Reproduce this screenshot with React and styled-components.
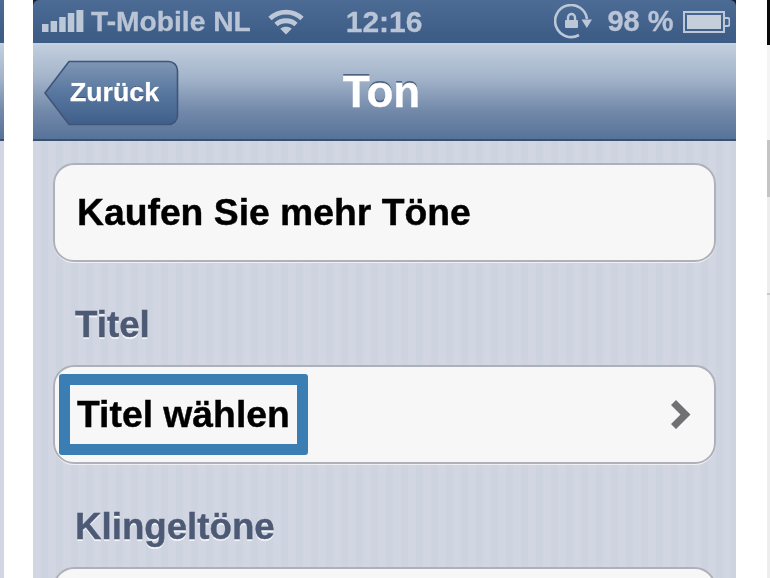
import React from "react";
import styled, { createGlobalStyle } from "styled-components";

const Global = createGlobalStyle`
  html, body { margin: 0; padding: 0; background: #fff; }
  body { width: 770px; height: 578px; overflow: hidden; font-family: "Liberation Sans", Arial, sans-serif; }
`;

const Page = styled.div`
  width: 770px;
  height: 578px;
  display: flex;
  overflow: hidden;
  background: #fff;
  filter: blur(0.45px);
`;

const Phone = styled.div`
  width: ${p => p.$w}px;
  margin-left: ${p => p.$ml || 0}px;
  flex: none;
  display: flex;
  flex-direction: column;
  overflow: hidden;
  background: #16202e;
`;

const StatusBar = styled.div`
  height: 43px;
  flex: none;
  display: flex;
  align-items: center;
  padding: 0 6px 0 9px;
  color: #b9c5d6;
  font-weight: 700;
  font-size: 28.2px;
  -webkit-text-stroke: 0.3px #b9c5d6;
  border-bottom: 2px solid #c6d2e0;
  border-radius: ${p => (p.$corners ? "6px 6px 0 0" : "0")};
  background: linear-gradient(#4d6c95, #3d5c86 85%);
`;

const Carrier = styled.span`
  margin-left: 7px;
  line-height: 1;
  white-space: nowrap;
`;

const Clock = styled.span`
  margin-left: 42px;
  font-size: 30px;
  line-height: 1;
`;

const Percent = styled.span`
  margin-left: 15px;
  font-size: 29px;
  line-height: 1;
  white-space: nowrap;
`;

const Svg = styled.svg`
  flex: none;
  display: block;
  margin-left: ${p => p.$ml || 0}px;
`;

const Nav = styled.div`
  height: 94px;
  flex: none;
  display: grid;
  grid-template-columns: 1fr auto 1fr;
  align-items: center;
  padding: 0 17px 0 11px;
  border-bottom: 2px solid #3b4f6e;
  background: linear-gradient(#c1cedd, #a3b4ca 35%, #7289aa 70%, #567399);
`;

const Back = styled.div`
  position: relative;
  width: 135px;
  height: 66px;
  margin-top: 1px;
  display: flex;
  align-items: center;
  justify-content: flex-end;
  padding-right: 20px;
  box-sizing: border-box;
  justify-self: start;
`;

const BackShape = styled.svg`
  position: absolute;
  inset: 0;
`;

const BackLabel = styled.span`
  position: relative;
  color: #fff;
  font-size: 26.7px;
  font-weight: 700;
  line-height: 1;
  -webkit-text-stroke: 0.3px #fff;
  text-shadow: 0 -1px 0 #3c5273;
`;

const Title = styled.div`
  color: #fff;
  font-size: 44px;
  font-weight: 700;
  line-height: 1;
  -webkit-text-stroke: 0.4px #fff;
  text-shadow: 0 -2px 0 #4f6480;
`;

const Content = styled.div`
  flex: 1;
  min-height: 0;
  padding: 22px 20px 0;
  overflow: hidden;
  background: repeating-linear-gradient(90deg, #d1d6e2 0 8px, #cdd3df 8px 15px);
`;

const Card = styled.div`
  height: 95px;
  box-sizing: content-box;
  display: flex;
  align-items: center;
  justify-content: space-between;
  padding-right: 23px;
  border: 2px solid #aeb1b8;
  border-radius: 21px;
  background: #f7f7f8;
  box-shadow: 0 1px 0 #eef0f4;
`;

const RowText = styled.span`
  margin-left: 22px;
  color: #000;
  font-size: 37.3px;
  font-weight: 700;
  line-height: 1;
  -webkit-text-stroke: 0.4px #000;
  white-space: nowrap;
`;

const Focus = styled.div`
  margin-left: 4px;
  width: 249px;
  height: 81px;
  box-sizing: border-box;
  display: flex;
  align-items: center;
  border: 11px solid #3a7eb4;
  border-radius: 3px;
  background: #f7f7f8;
`;

const FocusText = styled(RowText)`
  margin-left: 7px;
`;

const SectionLabel = styled.div`
  height: 79px;
  box-sizing: content-box;
  padding-top: 24px;
  display: flex;
  align-items: center;
  padding-left: 22px;
  color: #4d5a75;
  font-size: 36.7px;
  font-weight: 700;
  -webkit-text-stroke: 0.4px #4d5a75;
  text-shadow: 0 2px 0 #f2f4f8;
  line-height: 1;
  white-space: nowrap;
`;

const RightSliver = styled.div`
  width: 3px;
  margin-left: 31px;
  flex: none;
  display: flex;
  flex-direction: column;
`;

const SliverPart = styled.div`
  height: ${p => p.$h}px;
  flex: none;
  background: ${p => p.$bg};
`;

const Signal = () => (
  <Svg width="42" height="24" viewBox="0 0 42 24">
    <rect x="0" y="14" width="6.5" height="8" fill="#bcc8d8" />
    <rect x="8.6" y="11" width="6.5" height="11" fill="#bcc8d8" />
    <rect x="17.2" y="7" width="6.5" height="15" fill="#bcc8d8" />
    <rect x="25.8" y="3" width="6.5" height="19" fill="#bcc8d8" />
    <rect x="34.4" y="0" width="7" height="22" fill="#bcc8d8" />
  </Svg>
);

const Wifi = ({ ml }) => (
  <Svg $ml={ml} width="36" height="26" viewBox="0 0 36 26" fill="none" stroke="#bcc8d8" strokeWidth="4.8">
    <path d="M2 9.5C11 1 25 1 34 9.5" />
    <path d="M8 15.5C13.5 10.5 22.5 10.5 28 15.5" />
    <path d="M18 25.5L12.3 19.8C15.5 17.2 20.5 17.2 23.7 19.8Z" fill="#bcc8d8" stroke="none" />
  </Svg>
);

const RotationLock = ({ ml }) => (
  <Svg $ml={ml} width="38" height="36" viewBox="0 0 38 36" fill="none">
    <path d="M33 15A16 16 0 1 0 25 31" stroke="#bcc8d8" strokeWidth="2.6" />
    <path d="M27.5 15.5H38L32.8 24Z" fill="#bcc8d8" />
    <rect x="11" y="16" width="13" height="8" rx="1" fill="#bcc8d8" />
    <path d="M14 16V13.5A3.5 3.5 0 0 1 21 13.5V16" stroke="#bcc8d8" strokeWidth="2.4" />
  </Svg>
);

const Battery = ({ ml }) => (
  <Svg $ml={ml} width="47" height="24" viewBox="0 0 47 24" fill="none">
    <rect x="1" y="2" width="40" height="20" stroke="#bcc8d8" strokeWidth="2" />
    <rect x="4" y="5" width="34" height="14" fill="#c5cfdc" />
    <path d="M42 8H44.5A2 2 0 0 1 46.5 10V14A2 2 0 0 1 44.5 16H42" stroke="#bcc8d8" strokeWidth="2" />
  </Svg>
);

const Chevron = () => (
  <Svg width="20" height="29" viewBox="0 0 20 29">
    <path d="M0 5L5 0L19.5 14.5L5 29L0 24L9.5 14.5Z" fill="#717174" />
  </Svg>
);

const BackButtonShape = () => (
  <BackShape width="135" height="66" viewBox="0 0 135 66">
    <defs>
      <linearGradient id="backFill" x1="0" y1="0" x2="0" y2="1">
        <stop offset="0" stopColor="#7f96b6" />
        <stop offset="0.5" stopColor="#58779f" />
        <stop offset="1" stopColor="#3f5f8b" />
      </linearGradient>
    </defs>
    <path
      d="M1 33L25 1.5H124A9 9 0 0 1 133.5 10.5V55A9 9 0 0 1 124 64.5H25Z"
      fill="url(#backFill)"
      stroke="#3f5578"
      strokeWidth="1.6"
    />
  </BackShape>
);

export default function App() {
  return (
    <Page>
      <Global />
      <Phone $w={4}>
        <StatusBar />
        <Nav />
        <Content />
      </Phone>
      <Phone $w={703} $ml={29}>
        <StatusBar $corners>
          <Signal />
          <Carrier>T-Mobile NL</Carrier>
          <Wifi ml={17} />
          <Clock>12:16</Clock>
          <RotationLock ml={132} />
          <Percent>98 %</Percent>
          <Battery ml={9} />
        </StatusBar>
        <Nav>
          <Back>
            <BackButtonShape />
            <BackLabel>Zurück</BackLabel>
          </Back>
          <Title>Ton</Title>
        </Nav>
        <Content>
          <Card>
            <RowText>Kaufen Sie mehr Töne</RowText>
          </Card>
          <SectionLabel>Titel</SectionLabel>
          <Card>
            <Focus>
              <FocusText>Titel wählen</FocusText>
            </Focus>
            <Chevron />
          </Card>
          <SectionLabel>Klingeltöne</SectionLabel>
          <Card />
        </Content>
      </Phone>
      <RightSliver>
        <SliverPart $h={45} $bg="#0a0a0a" />
        <SliverPart $h={95} $bg="#f4f4f4" />
        <SliverPart $h={57} $bg="#c4c4c4" />
        <SliverPart $h={96} $bg="#ededed" />
        <SliverPart $h={2} $bg="#c8c8c8" />
        <SliverPart $h={285} $bg="#ededed" />
      </RightSliver>
    </Page>
  );
}
